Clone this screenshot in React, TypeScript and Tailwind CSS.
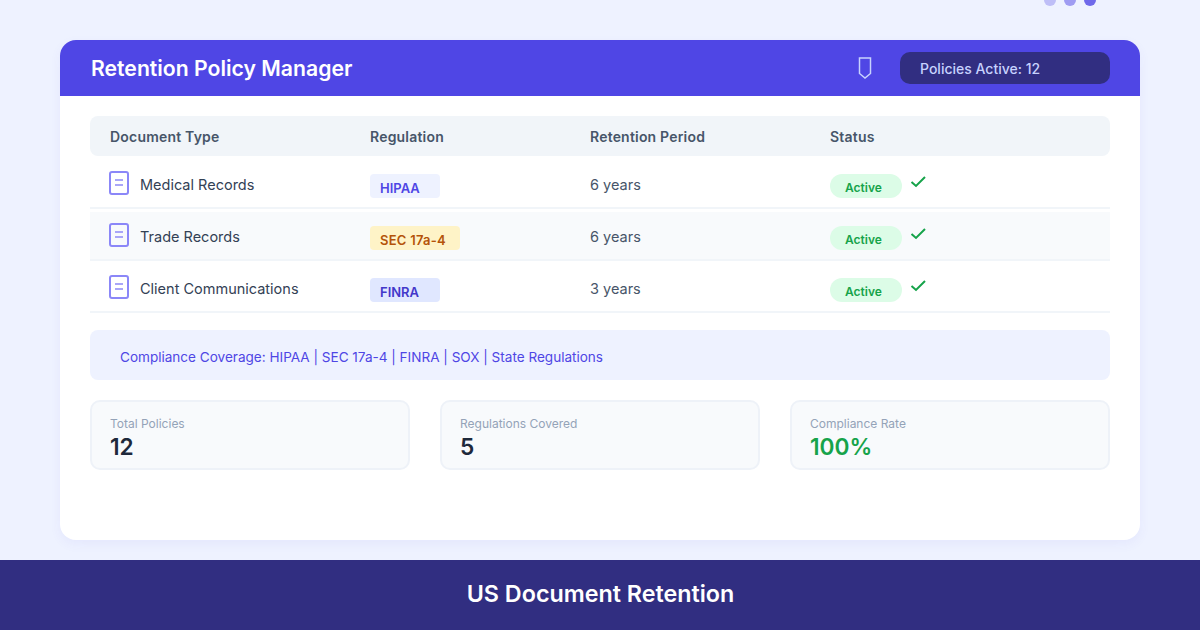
import React from "react";

const rows = [
  { name: "Medical Records", reg: "HIPAA", period: "6 years", badge: "w-[70px] bg-[#eef2ff] text-[#4f46e5]", stripe: "" },
  { name: "Trade Records", reg: "SEC 17a-4", period: "6 years", badge: "w-[90px] bg-[#fef3c7] tracking-[0.25px] text-[#b45309]", stripe: "bg-[#f8fafc]" },
  { name: "Client Communications", reg: "FINRA", period: "3 years", badge: "w-[70px] bg-[#e0e7ff] text-[#4338ca]", stripe: "" },
];

const stats = [
  { label: "Total Policies", value: "12", color: "text-[#1e293b]" },
  { label: "Regulations Covered", value: "5", color: "text-[#1e293b]" },
  { label: "Compliance Rate", value: "100%", color: "text-[#16a34a]" },
];

function DocIcon() {
  return (
    <svg width="20" height="24" viewBox="0 0 20 24" fill="none" className="-ml-px mt-[-4px] block">
      <rect x="1" y="1" width="18" height="22" rx="2" stroke="#8b87f8" strokeWidth="2" />
      <rect x="6" y="8" width="8" height="2" fill="#a9a6f8" />
      <rect x="6" y="13" width="8" height="2" fill="#a9a6f8" />
    </svg>
  );
}

export default function App() {
  return (
    <div className="relative flex h-[630px] w-[1200px] flex-col overflow-hidden bg-[#eef2ff] font-['Inter',sans-serif]">
      <div className="absolute right-[104px] top-[-6px] flex gap-2">
        <div className="h-3 w-3 rounded-full bg-[#4f46e5] opacity-30" />
        <div className="h-3 w-3 rounded-full bg-[#4f46e5] opacity-50" />
        <div className="h-3 w-3 rounded-full bg-[#4f46e5] opacity-80" />
      </div>
      <main className="flex-1 px-[60px] pt-10">
        <div className="h-[500px] overflow-hidden rounded-2xl bg-white shadow-[0_4px_12px_rgba(79,70,229,0.06)]">
          <header className="flex h-14 items-center justify-between bg-[#4f46e5] pl-[31px] pr-[30px]">
            <h1 className="pt-0.5 text-[21.2px] font-semibold text-white">Retention Policy Manager</h1>
            <div className="flex items-center gap-[28px]">
              <svg width="14" height="24" viewBox="0 0 14 24" fill="none">
                <path d="M1.5 2H12.5V17.5L7 22L1.5 17.5Z" stroke="#c7d2fe" strokeWidth="1.5" />
              </svg>
              <div className="flex h-8 w-[210px] items-center rounded-[10px] bg-[#312e81] px-5 pt-0.5 text-sm font-medium text-[#c7d2fe]">
                Policies Active: 12
              </div>
            </div>
          </header>
          <div className="px-[30px] pt-5">
            <div className="flex h-10 items-center rounded-lg bg-[#f1f5f9] px-5 pt-0.5 text-sm font-semibold tracking-[0.2px] text-[#475569]">
              <div className="w-[260px]">Document Type</div>
              <div className="w-[220px]">Regulation</div>
              <div className="w-[240px]">Retention Period</div>
              <div>Status</div>
            </div>
            <div className="mt-1 flex flex-col gap-[3px]">
              {rows.map((r) => (
                <div key={r.name} className={`flex h-[49px] items-start border-b-2 border-[#f1f5f9] px-5 ${r.stripe}`}>
                  <div className="flex w-[260px] items-center gap-[11px] pt-[14px] text-[14.5px] text-[#334155]">
                    <DocIcon />
                    <span>{r.name}</span>
                  </div>
                  <div className="w-[220px] pt-[14px]">
                    <div className={`flex h-6 items-center rounded pl-[10px] pt-[5px] text-[13px] font-semibold ${r.badge}`}>{r.reg}</div>
                  </div>
                  <div className="w-[240px] pt-[14px] text-[14.5px] text-[#475569]">{r.period}</div>
                  <div className="flex gap-2 pt-[14px]">
                    <div className="flex h-6 w-[72px] items-center rounded-xl bg-[#dcfce7] pl-[15px] pt-1 text-xs font-semibold text-[#16a34a]">Active</div>
                    <svg width="16" height="14" viewBox="0 0 16 14" fill="none" className="mt-[1px]">
                      <path d="M1.5 7L6 11L15 2" stroke="#16a34a" strokeWidth="2" />
                    </svg>
                  </div>
                </div>
              ))}
            </div>
            <div className="mt-[17px] flex h-[50px] items-center rounded-lg bg-[#eef2ff] px-[30px] pt-1 text-[13.56px] text-[#4f46e5]">
              Compliance Coverage: HIPAA | SEC 17a-4 | FINRA | SOX | State Regulations
            </div>
            <div className="mt-5 flex gap-[30px]">
              {stats.map((s) => (
                <div key={s.label} className="h-[70px] flex-1 rounded-[10px] border-2 border-[#eef2f8] bg-[#f8fafc] px-[18px] pt-[14px]">
                  <div className="text-xs leading-[15px] text-[#94a3b8]">{s.label}</div>
                  <div className={`text-[22.7px] font-semibold leading-[31px] ${s.color}`}>{s.value}</div>
                </div>
              ))}
            </div>
          </div>
        </div>
      </main>
      <footer className="flex h-[70px] items-center justify-center bg-[#312e81] pb-0.5 pl-px text-[23.3px] font-semibold text-white">
        US Document Retention
      </footer>
    </div>
  );
}
